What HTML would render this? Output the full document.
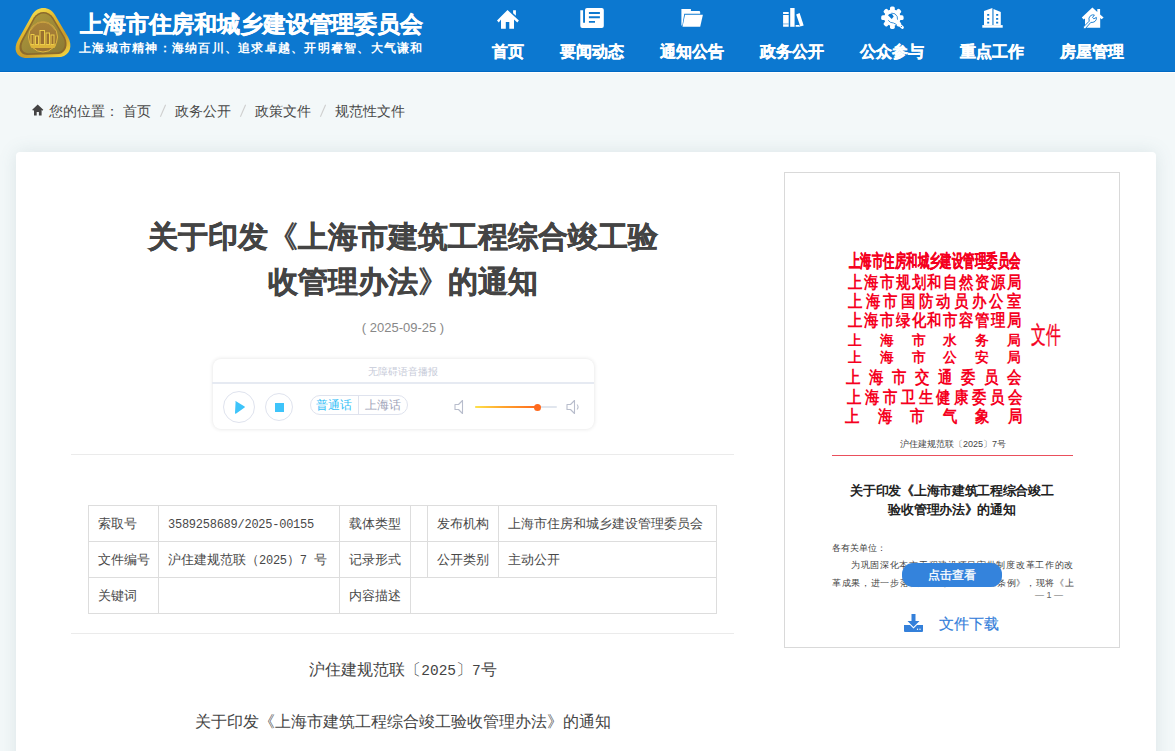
<!DOCTYPE html>
<html><head><meta charset="utf-8">
<style>
*{margin:0;padding:0;box-sizing:border-box}
html,body{width:1175px;height:751px;overflow:hidden;background:#f3f8f9;font-family:"Liberation Sans",sans-serif;color:#333}
svg{position:absolute;overflow:visible}
#hdr{position:absolute;left:0;top:0;width:1175px;height:72px;background:#0c78d0;border-bottom:1px solid #006ac4}
#hdr2{position:absolute;left:0;top:72px;width:1175px;height:1px;background:#fff}
.t1{position:absolute;left:80px;top:8.5px;font-size:23px;font-weight:bold;color:#fff;white-space:nowrap;line-height:30px;letter-spacing:-0.15px;-webkit-text-stroke:0.4px #fff}
.t2{position:absolute;left:79px;top:40px;font-size:12px;font-weight:bold;color:#fff;white-space:nowrap;line-height:16px;letter-spacing:1.25px}
.nav{position:absolute;top:0;height:71px;text-align:center;color:#fff;font-weight:bold;font-size:16px}
.nav .lb{position:absolute;left:0;right:0;top:40px;line-height:24px;white-space:nowrap;-webkit-text-stroke:0.3px #fff}
#bc{position:absolute;left:49px;top:101px;font-size:14px;color:#484848;white-space:nowrap;line-height:20px}
#bc span{position:absolute;top:0}
#bc .sl{color:#ccc}
#card{position:absolute;left:16px;top:152px;width:1140px;height:700px;background:#fff;border-radius:4px;box-shadow:0 0 18px rgba(90,120,130,.15)}
.title{position:absolute;left:72px;width:662px;top:214px;text-align:center;font-size:30px;font-weight:bold;color:#444;line-height:45px;-webkit-text-stroke:0.4px #444}
.date{position:absolute;left:72px;width:662px;top:319px;text-align:center;font-size:13px;color:#888;line-height:18px}
#player{position:absolute;left:213px;top:359px;width:381px;height:70px;background:#fff;border-radius:8px;box-shadow:0 0 4px rgba(0,0,0,.12)}
.hr{position:absolute;left:71px;width:663px;height:1px;background:#ebebeb}
table{position:absolute;left:88px;top:505px;border-collapse:collapse;font-size:13px;color:#484848}
td{border:1px solid #ddd;padding:0 0 0 9px;height:36px;white-space:nowrap}
.p1{position:absolute;left:72px;width:662px;text-align:center;font-size:16px;color:#444;line-height:22px;white-space:nowrap}
#doc{position:absolute;left:784px;top:172px;width:336px;height:476px;border:1px solid #d9d9d9;background:#fff;overflow:hidden}
.rl{position:absolute;display:flex;justify-content:space-between;color:#f5001e;font-weight:bold;line-height:20px;white-space:nowrap;transform-origin:0 0}
.dt{position:absolute;white-space:nowrap}
.ns{-webkit-text-stroke:0}
.mono{font-family:"Liberation Mono",monospace;font-size:12px;letter-spacing:-0.25px}
</style></head><body>
<div id="hdr"></div><div id="hdr2"></div>
<!-- emblem -->
<svg style="left:12px;top:4px" width="62" height="58" viewBox="0 0 62 58">
<defs>
<linearGradient id="g1" x1="0.2" y1="0" x2="0.8" y2="1">
<stop offset="0" stop-color="#f8e85a"/><stop offset=".35" stop-color="#e2b82e"/><stop offset=".7" stop-color="#c89a2a"/><stop offset="1" stop-color="#f0d040"/>
</linearGradient>
<linearGradient id="g2" x1="0" y1="0" x2="0" y2="1">
<stop offset="0" stop-color="#a88238"/><stop offset="1" stop-color="#9a7232"/>
</linearGradient>
<linearGradient id="g3" x1="0" y1="0" x2="1" y2="1">
<stop offset="0" stop-color="#b09a3c"/><stop offset="1" stop-color="#8c7a34"/>
</linearGradient>
</defs>
<path d="M20,11 C25,1.5 38,1.5 43,11 L56,33 C61,42 58,51 49,53 L13,54 C4,53 1,45 6,36 Z" fill="url(#g1)"/>
<path d="M21.8,13.5 C26.5,6 36.5,6 41.2,13.5 L53,33.5 C56.5,41 54,48.5 47,50 L15,51 C8,50.5 5.5,44.5 9,37 Z" fill="#8c6a2c"/>
<path d="M23,14.5 C27.5,7.8 35.5,7.8 40,14.5 L51.5,34 C54.5,40.5 52,47 46,48.2 L16,49.2 C10,48.8 8,43.5 10.8,37.5 Z" fill="url(#g3)"/>
<ellipse cx="31" cy="33" rx="14.5" ry="15" fill="url(#g2)" stroke="#e0b840" stroke-width="1"/>
<path d="M19,26 Q25,17 31,18 Q37,17 43,26" stroke="#c09a40" stroke-width="1.2" fill="none"/>
<path d="M17.5,40.5 L44.5,40.5 L42.5,44 L19.5,44 Z" fill="#dcb43a"/>
<g fill="#9a7030" stroke="#eccc48" stroke-width="1">
<rect x="19" y="30.5" width="3" height="10"/><rect x="23.5" y="32" width="3" height="8.5"/>
<rect x="28" y="26.5" width="4.5" height="14"/><rect x="34" y="29" width="3.5" height="11.5"/><rect x="39" y="31" width="3" height="9.5"/>
</g>
</svg>
<div class="t1">上海市住房和城乡建设管理委员会</div>
<div class="t2">上海城市精神：海纳百川、追求卓越、开明睿智、大气谦和</div>

<!-- nav -->
<div class="nav" style="left:475px;width:66px"><div class="lb">首页</div></div>
<div class="nav" style="left:542px;width:100px"><div class="lb">要闻动态</div></div>
<div class="nav" style="left:642px;width:100px"><div class="lb">通知公告</div></div>
<div class="nav" style="left:742px;width:100px"><div class="lb">政务公开</div></div>
<div class="nav" style="left:842px;width:100px"><div class="lb">公众参与</div></div>
<div class="nav" style="left:942px;width:100px"><div class="lb">重点工作</div></div>
<div class="nav" style="left:1042px;width:100px"><div class="lb">房屋管理</div></div>

<!-- home -->
<svg style="left:492px;top:4px" width="32" height="28" viewBox="0 0 32 28">
<path fill="#fff" d="M15.5,6 L26.9,16.6 L25.3,18.6 L22,15.6 L22,24.8 L17.3,24.8 L17.3,18.1 L13.8,18.1 L13.8,24.8 L9,24.8 L9,15.6 L6.8,18.6 L5,16.6 Z"/>
<path fill="#fff" d="M21.1,6.2 H23.9 V11.8 L21.1,9.2 Z"/>
</svg>
<!-- newspaper -->
<svg style="left:576px;top:4px" width="32" height="28" viewBox="0 0 32 28">
<path fill="#fff" fill-rule="evenodd" d="M11,3.9 H25.8 Q27.8,3.9 27.8,5.9 V21.9 Q27.8,23.9 25.8,23.9 H6.3 Q4.3,23.9 4.3,21.9 V6.2 H7.1 V18.8 H9 V5.9 Q9,3.9 11,3.9 Z M12.9,8 V9.9 H23.9 V8 Z M12.9,12.3 V14.2 H23.9 V12.3 Z M12.9,17 V18.8 H19 V17 Z"/>
</svg>
<!-- folder -->
<svg style="left:676px;top:4px" width="32" height="28" viewBox="0 0 32 28">
<path fill="#fff" d="M5.4,5 H14.9 V7.1 H23 Q24.2,7.1 24.2,8.3 V9.7 H8.3 L6.3,21.6 H5.4 Z"/>
<path fill="#fff" d="M9,10.8 H26.9 L24.2,22.8 H6.5 Z"/>
</svg>
<!-- books -->
<svg style="left:776px;top:2px" width="32" height="28" viewBox="0 0 32 28">
<path fill="#fff" d="M7.1,9.9 H12.7 V11.9 H7.1 Z M7.1,12.9 H12.7 V24.8 H7.1 Z"/>
<path fill="#fff" d="M14.2,6 H18.6 V24.8 H14.2 Z"/>
<path fill="#fff" d="M20.2,12.4 L23.6,11.1 L27.7,23.4 L24.3,24.6 Z"/>
<path fill="#fff" d="M19.6,23.1 L23.3,23.1 L24,24.8 L19.6,24.8 Z"/>
<rect x="7.1" y="21.1" width="5.6" height="1.6" fill="#0c78d0" opacity=".35"/>
</svg>
<!-- gear wrench -->
<svg style="left:876px;top:2px" width="32" height="28" viewBox="0 0 32 28">
<g fill="#fff">
<circle cx="16.4" cy="15.7" r="8.3"/>
<g transform="translate(16.4 15.7)">
<rect x="-2.4" y="-11.2" width="4.8" height="5" rx="1.6"/>
<rect x="-2.4" y="6.2" width="4.8" height="5" rx="1.6"/>
<rect x="-11.2" y="-2.4" width="5" height="4.8" rx="1.6"/>
<rect x="6.2" y="-2.4" width="5" height="4.8" rx="1.6"/>
<g transform="rotate(45)">
<rect x="-2.4" y="-11" width="4.8" height="5" rx="1.6"/>
<rect x="-2.4" y="6" width="4.8" height="5" rx="1.6"/>
<rect x="-11" y="-2.4" width="5" height="4.8" rx="1.6"/>
<rect x="6" y="-2.4" width="5" height="4.8" rx="1.6"/>
</g></g>
<path d="M19.5,17.2 L27.6,24.6 Q28.4,25.8 27.2,26.8 Q26.2,27.4 25.4,26.6 L17.6,19.4 Z"/>
</g>
<path fill="#0c78d0" d="M12,13.3 Q13,11.8 15.7,11.6 L17.7,14.5 L15.7,16.9 Z"/>
<path d="M15.5,11.1 Q19.8,11 21.2,14.5 L21.5,17.7" stroke="#0c78d0" stroke-width=".8" fill="none"/>
<path d="M12.2,18.3 Q14,21 17.5,21 L20.7,22.6" stroke="#0c78d0" stroke-width=".8" fill="none"/>
<circle cx="25.4" cy="24.5" r=".6" fill="#0c78d0"/>
</svg>
<!-- building -->
<svg style="left:976px;top:2px" width="32" height="28" viewBox="0 0 32 28">
<path fill="#fff" fill-rule="evenodd" d="M8,9.1 L16.4,6 V23.1 H8 Z M11.2,11.9 V13.8 H13.2 V11.9 Z M11.2,15.9 V17.7 H13.2 V15.9 Z M11.2,19.8 V21.6 H13.2 V19.8 Z"/>
<path fill="#fff" fill-rule="evenodd" d="M17.5,7.1 L24.8,10.1 V23.1 H17.5 Z M20.1,11.9 V13.8 H22.2 V11.9 Z M20.1,15.9 V17.7 H22.2 V15.9 Z M20.1,19.8 V21.6 H22.2 V19.8 Z"/>
<path fill="#fff" d="M6.3,23.1 H26.7 V25.7 H6.3 Z"/>
</svg>
<!-- house wrench -->
<svg style="left:1076px;top:2px" width="32" height="28" viewBox="0 0 32 28">
<path fill="#fff" d="M16.4,5.6 L21.3,10 V6.9 H24.1 V12.5 L27.6,15.4 L25.6,17.3 L24.2,16 V25.7 H9 V16.5 L7.6,17.6 L5.8,15.4 Z"/>
<path fill="#fff" stroke="#0c78d0" stroke-width=".9" stroke-linejoin="round" d="M9.4,26.6 Q8.2,26.8 7.6,26 Q7.2,25.2 7.8,24.6 L13.2,19.2 Q12,15.8 14.6,13.6 Q16.4,12.4 18.4,13 L16.6,15.4 L17.8,16.8 L20.4,15.4 Q20.8,17.8 19,19.4 Q17,20.8 14.8,20.4 Z"/>
</svg>

<!-- breadcrumb -->
<svg style="left:32px;top:104px" width="12" height="12" viewBox="0 0 12 12">
<path fill="#444" d="M5.7,0.4 L11.3,5.8 L10.4,6.7 L9.6,6 V11.6 H6.9 V8 H4.7 V11.6 H2 V6 L1.1,6.7 L0.2,5.8 Z"/>
</svg>
<svg style="left:159px;top:104px" width="8" height="14" viewBox="0 0 8 14"><path d="M6.6,0.8 L1.4,12.8" stroke="#cfcfcf" stroke-width="1.1"/></svg><svg style="left:239px;top:104px" width="8" height="14" viewBox="0 0 8 14"><path d="M6.6,0.8 L1.4,12.8" stroke="#cfcfcf" stroke-width="1.1"/></svg><svg style="left:319px;top:104px" width="8" height="14" viewBox="0 0 8 14"><path d="M6.6,0.8 L1.4,12.8" stroke="#cfcfcf" stroke-width="1.1"/></svg>
<div id="bc"><span style="left:0">您的位置：</span><span style="left:74px">首页</span><span style="left:126px">政务公开</span><span style="left:206px">政策文件</span><span style="left:286px">规范性文件</span></div>

<div id="card"></div>
<div class="title">关于印发<span class="ns">《</span>上海市建筑工程综合竣工验<br>收管理办法<span class="ns">》</span>的通知</div>
<div class="date">( 2025-09-25 )</div>
<div id="player"></div>
<div style="position:absolute;left:212px;top:363.5px;width:382px;text-align:center;font-size:10px;line-height:16px;color:#c6cad8;white-space:nowrap">无障碍语音播报</div>
<div style="position:absolute;left:212px;top:382px;width:382px;height:2px;background:#e6eaf2"></div>
<div style="position:absolute;left:223px;top:391px;width:32px;height:32px;border:1px solid #dfe3ee;border-radius:50%"></div>
<svg style="left:223px;top:391px" width="32" height="32" viewBox="0 0 32 32"><path d="M12.6,10.8 Q12,10 12.6,10 L21.6,15.4 Q22.3,16 21.6,16.6 L13.2,22.4 Q12,23 12,22 Z" fill="#3ec4fa"/></svg>
<div style="position:absolute;left:265px;top:393px;width:28px;height:28px;border:1px solid #dfe3ee;border-radius:50%"></div>
<div style="position:absolute;left:275px;top:403px;width:9px;height:9px;background:#3ec4fa"></div>
<div style="position:absolute;left:310px;top:395px;width:98px;height:20px;border:1px solid #dfe3ee;border-radius:10px"></div>
<div style="position:absolute;left:358px;top:396px;width:1px;height:18px;background:#dfe3ee"></div>
<div style="position:absolute;left:316px;top:397px;font-size:12px;line-height:16px;color:#36bff7;white-space:nowrap">普通话</div>
<div style="position:absolute;left:365px;top:397px;font-size:12px;line-height:16px;color:#9ea3b8;white-space:nowrap">上海话</div>
<svg style="left:452px;top:398px" width="14" height="18" viewBox="0 0 14 18"><path d="M3,6.5 H6.5 L10.5,2.5 V15.5 L6.5,11.5 H3 Z" fill="none" stroke="#b8bdcc" stroke-width="1.1" stroke-linejoin="round"/></svg>
<div style="position:absolute;left:475px;top:406px;width:82px;height:2px;background:#e1e6ee;border-radius:1px"></div>
<div style="position:absolute;left:475px;top:406px;width:62px;height:2px;background:linear-gradient(90deg,#ffe24a,#ffa52e 45%,#ff6a1e);border-radius:1px"></div>
<div style="position:absolute;left:533.5px;top:403.5px;width:7px;height:7px;background:#ff6a1e;border-radius:50%"></div>
<svg style="left:564px;top:398px" width="20" height="18" viewBox="0 0 20 18"><path d="M3,6.5 H6.5 L10.5,2.5 V15.5 L6.5,11.5 H3 Z" fill="none" stroke="#b8bdcc" stroke-width="1.1" stroke-linejoin="round"/><path d="M13,6.5 Q15.2,9 13,11.5" fill="none" stroke="#b8bdcc" stroke-width="1.1"/></svg>
<div class="hr" style="top:454px"></div>
<table>
<tr><td style="width:70px">索取号</td><td style="width:181px"><span class="mono">3589258689/2025-00155</span></td><td style="width:71px">载体类型</td><td style="width:17px"></td><td style="width:71px">发布机构</td><td style="width:218px">上海市住房和城乡建设管理委员会</td></tr>
<tr><td>文件编号</td><td>沪住建规范联（<span class="mono">2025</span>）<span class="mono">7 </span>号</td><td>记录形式</td><td></td><td>公开类别</td><td>主动公开</td></tr>
<tr><td>关键词</td><td></td><td>内容描述</td><td colspan="3"></td></tr>
</table>
<div class="hr" style="top:633px"></div>
<div class="p1" style="top:658.5px">沪住建规范联〔<span style="font-family:'Liberation Mono',monospace;font-size:14.5px">2025</span>〕<span style="font-family:'Liberation Mono',monospace;font-size:14.5px">7</span>号</div>
<div class="p1" style="top:711px">关于印发《上海市建筑工程综合竣工验收管理办法》的通知</div>
<div id="doc"></div>
<div class="rl" style="top:250.5px;left:849px;width:257px;font-size:17px;transform-origin:0 0;transform:scale(0.667,1.05);-webkit-text-stroke:0.3px #f5001e"><span>上</span><span>海</span><span>市</span><span>住</span><span>房</span><span>和</span><span>城</span><span>乡</span><span>建</span><span>设</span><span>管</span><span>理</span><span>委</span><span>员</span><span>会</span></div>
<div class="rl" style="top:270px;left:848px;width:173px;font-size:14px;transform:scale(1.0,1.18)"><span>上</span><span>海</span><span>市</span><span>规</span><span>划</span><span>和</span><span>自</span><span>然</span><span>资</span><span>源</span><span>局</span></div>
<div class="rl" style="top:289px;left:848px;width:173px;font-size:14px;transform:scale(1.0,1.18)"><span>上</span><span>海</span><span>市</span><span>国</span><span>防</span><span>动</span><span>员</span><span>办</span><span>公</span><span>室</span></div>
<div class="rl" style="top:308px;left:848px;width:173px;font-size:14px;transform:scale(1.0,1.18)"><span>上</span><span>海</span><span>市</span><span>绿</span><span>化</span><span>和</span><span>市</span><span>容</span><span>管</span><span>理</span><span>局</span></div>
<div class="rl" style="top:330px;left:848px;width:173px;font-size:14px;transform:scale(1.0,1.02)"><span>上</span><span>海</span><span>市</span><span>水</span><span>务</span><span>局</span></div>
<div class="rl" style="top:347px;left:848px;width:173px;font-size:14px;transform:scale(1.0,1.02)"><span>上</span><span>海</span><span>市</span><span>公</span><span>安</span><span>局</span></div>
<div class="rl" style="top:365px;left:846px;width:175px;font-size:14px;transform:scale(1.0,1.18)"><span>上</span><span>海</span><span>市</span><span>交</span><span>通</span><span>委</span><span>员</span><span>会</span></div>
<div class="rl" style="top:385px;left:847px;width:175px;font-size:14px;transform:scale(1.0,1.18)"><span>上</span><span>海</span><span>市</span><span>卫</span><span>生</span><span>健</span><span>康</span><span>委</span><span>员</span><span>会</span></div>
<div class="rl" style="top:404px;left:845px;width:177px;font-size:14px;transform:scale(1.0,1.18)"><span>上</span><span>海</span><span>市</span><span>气</span><span>象</span><span>局</span></div>
<div style="position:absolute;left:1031px;top:320px;font-size:24px;line-height:30px;color:#f5001e;transform-origin:0 0;transform:scale(0.62,1);white-space:nowrap;-webkit-text-stroke:0.4px #f5001e">文件</div>
<div class="dt" style="left:900px;top:438px;width:105px;font-size:9px;line-height:12px;color:#444;letter-spacing:0px;text-align:center">沪住建规范联〔2025〕7号</div>
<div style="position:absolute;left:832px;top:455px;width:241px;height:1px;background:#ea4f5c"></div>
<div class="dt" style="left:784px;top:481px;width:336px;text-align:center;font-size:13px;line-height:19px;font-weight:bold;color:#222;letter-spacing:-0.3px">关于印发《上海市建筑工程综合竣工<br>验收管理办法》的通知</div>
<div class="dt" style="left:832px;top:541.5px;font-size:8.5px;line-height:12px;color:#444;letter-spacing:0px">各有关单位：</div>
<div class="dt" style="left:851px;top:558.5px;font-size:8.5px;line-height:12px;color:#444;letter-spacing:0.7px">为巩固深化本市工程建设项目审批制度改革工作的改</div>
<div class="dt" style="left:832px;top:576.5px;font-size:8.5px;line-height:12px;color:#444;letter-spacing:0.7px">革成果，进一步落实《上海市建设工程条例》，现将《上</div>
<div class="dt" style="left:1035px;top:589px;font-size:9px;line-height:12px;color:#666">— 1 —</div>
<div style="position:absolute;left:902px;top:563px;width:100px;height:24px;background:#3483dc;border-radius:11px;color:#fff;font-size:12.4px;line-height:25.5px;text-align:center;white-space:nowrap;-webkit-text-stroke:0.3px #fff">点击查看</div>
<svg style="left:903px;top:613px" width="21" height="20" viewBox="0 0 21 20"><path fill="#3480da" d="M8.5,1 H12.5 V8 H16.5 L10.5,14 L4.5,8 H8.5 Z"/><path fill="#3480da" d="M1,12 H7 L10.5,15.5 L14,12 H20 V18 Q20,19 19,19 H2 Q1,19 1,18 Z"/><circle cx="14.5" cy="16.3" r=".7" fill="#fff"/><circle cx="17" cy="16.3" r=".7" fill="#fff"/></svg>
<div style="position:absolute;left:939px;top:613.5px;font-size:14.6px;line-height:20px;color:#3480da;white-space:nowrap;-webkit-text-stroke:0.2px #3480da">文件下载</div>
</body></html>
